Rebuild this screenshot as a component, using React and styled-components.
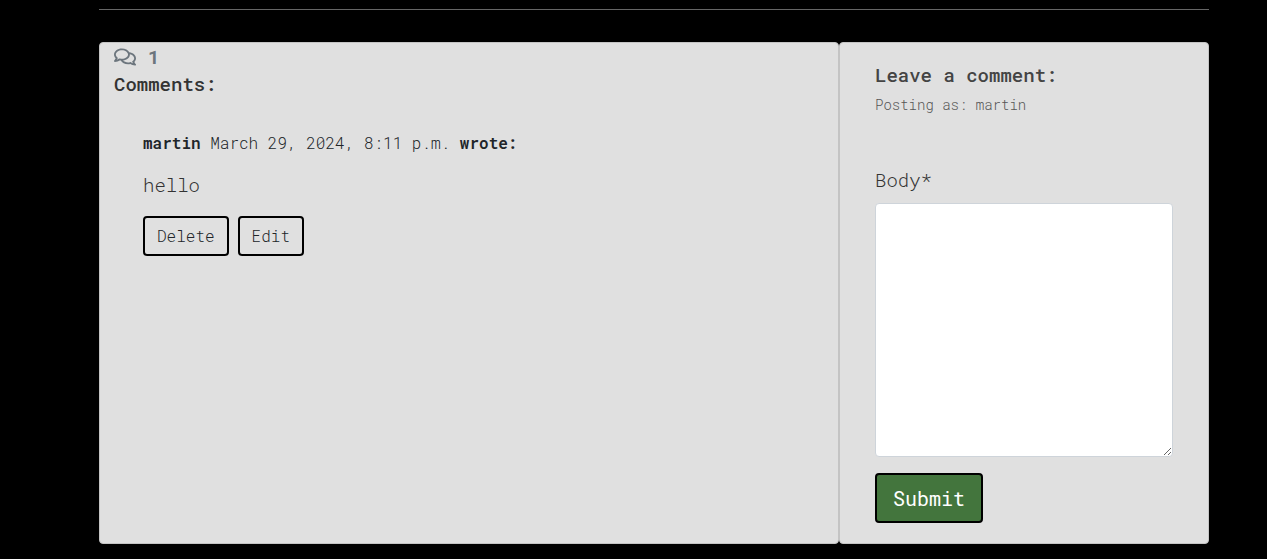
import React from "react";
import styled, { createGlobalStyle } from "styled-components";
import { FaRegComments } from "react-icons/fa";

const GlobalStyle = createGlobalStyle`
  *, *::before, *::after { box-sizing: border-box; }
  body {
    margin: 0;
    background: #000;
    color: #212529;
    font-family: "Roboto Mono", "Liberation Mono", monospace;
    font-size: 16px;
    font-weight: 350;
    line-height: 24px;
  }
`;

const Page = styled.main`
  padding: 9px 58px 15px 99px;
`;

const Divider = styled.hr`
  margin: 0 0 32px;
  border: 0;
  border-top: 1px solid #666;
`;

const Columns = styled.div`
  display: grid;
  grid-template-columns: 2fr 1fr;
`;

const Card = styled.section`
  min-width: 0;
  padding: ${(p) => (p.$roomy ? "18px 35px 20px" : "0 14px")};
  background: #e0e0e0;
  border: 1px solid #c4c4c4;
  border-radius: 4px;
`;

const Count = styled.div`
  display: flex;
  align-items: center;
  gap: 12px;
  height: 28px;
  color: #6c757d;
  font-size: 19px;
  font-weight: 700;

  svg {
    width: 22px;
    height: 20px;
  }
`;

const Heading = styled.h2`
  margin: 0;
  color: ${(p) => p.$color};
  font-size: 19px;
  font-weight: 500;
  line-height: ${(p) => (p.$compact ? "26px" : "28px")};
`;

const Comment = styled.article`
  padding: 34px 29px;
`;

const Byline = styled.p`
  margin: 0 0 16px;

  strong {
    font-weight: 600;
  }
`;

const CommentText = styled.p`
  margin: 0 0 17px;
  color: #333;
  font-size: 19px;
  line-height: 28px;
`;

const Actions = styled.div`
  display: flex;
  gap: 9px;
`;

const Button = styled.button`
  padding: ${(p) => (p.$primary ? "8px 16px" : "6px 12px")};
  border: 2px solid #000;
  border-radius: 4px;
  background: ${(p) => (p.$primary ? "#43753d" : "transparent")};
  color: ${(p) => (p.$primary ? "#fff" : "#212529")};
  font-family: inherit;
  font-size: ${(p) => (p.$primary ? "20px" : "16px")};
  font-weight: ${(p) => (p.$primary ? 400 : 350)};
  line-height: ${(p) => (p.$primary ? "30px" : "24px")};
  cursor: pointer;
`;

const PostingAs = styled.p`
  margin: 4px 0 49px;
  color: #555;
  font-size: 14px;
`;

const Label = styled.label`
  display: block;
  margin-bottom: 9px;
  color: #333;
  font-size: 19px;
  line-height: 28px;
`;

const TextArea = styled.textarea`
  display: block;
  width: 100%;
  height: 254px;
  margin-bottom: 16px;
  padding: 6px 12px;
  border: 1px solid #ced4da;
  border-radius: 4px;
  background: #fff;
  color: #495057;
  font: inherit;
  resize: vertical;
`;

export default function App() {
  return (
    <>
      <GlobalStyle />
      <Page>
        <Divider />
        <Columns>
          <Card>
            <Count>
              <FaRegComments aria-hidden="true" />
              <span>1</span>
            </Count>
            <Heading $color="#333" $compact>Comments:</Heading>
            <Comment>
              <Byline>
                <strong>martin</strong> March 29, 2024, 8:11 p.m. <strong>wrote:</strong>
              </Byline>
              <CommentText>hello</CommentText>
              <Actions>
                <Button type="button">Delete</Button>
                <Button type="button">Edit</Button>
              </Actions>
            </Comment>
          </Card>
          <Card $roomy>
            <Heading as="h3" $color="#444">Leave a comment:</Heading>
            <PostingAs>Posting as: martin</PostingAs>
            <form onSubmit={(e) => e.preventDefault()}>
              <Label htmlFor="comment-body">Body*</Label>
              <TextArea id="comment-body" name="body" required />
              <Button type="submit" $primary>Submit</Button>
            </form>
          </Card>
        </Columns>
      </Page>
    </>
  );
}
